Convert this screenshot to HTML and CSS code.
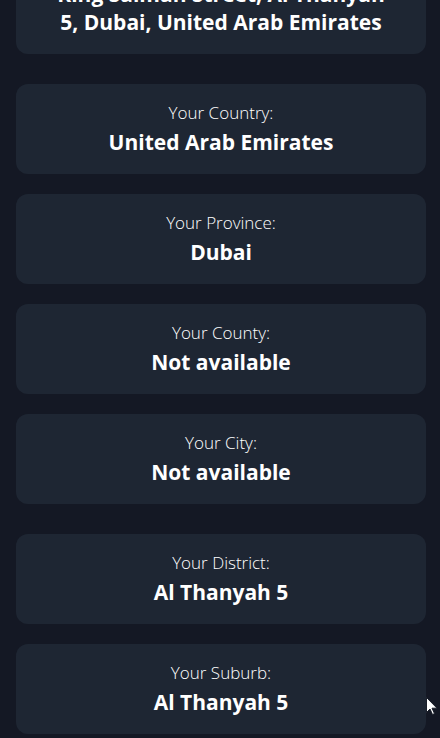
FILE: index.html
```html
<!DOCTYPE html>
<html lang="en">
<head>
    <meta charset="UTF-8">
    <meta name="viewport" content="width=device-width, initial-scale=1.0">
    <title>Your Location</title>
    <link rel="stylesheet" href="styles.css">
</head>
<body>
    <div class="location-list">
        <div class="info-card spaced">
            <p class="info-label">Your Address:</p>
            <p class="info-value">King Salman Street, Al Thanyah<br>5, Dubai, United Arab Emirates</p>
        </div>
        <div class="info-card">
            <p class="info-label">Your Country:</p>
            <p class="info-value">United Arab Emirates</p>
        </div>
        <div class="info-card">
            <p class="info-label">Your Province:</p>
            <p class="info-value">Dubai</p>
        </div>
        <div class="info-card">
            <p class="info-label">Your County:</p>
            <p class="info-value">Not available</p>
        </div>
        <div class="info-card spaced">
            <p class="info-label">Your City:</p>
            <p class="info-value">Not available</p>
        </div>
        <div class="info-card">
            <p class="info-label">Your District:</p>
            <p class="info-value">Al Thanyah 5</p>
        </div>
        <div class="info-card">
            <p class="info-label">Your Suburb:</p>
            <p class="info-value">Al Thanyah 5</p>
        </div>
    </div>

    <!-- mouse pointer -->
    <svg class="pointer" width="12" height="19" viewBox="0 0 12 19">
        <path d="M0.5 0.5 L0.5 15.5 L4 12 L6.5 17.5 L8.5 16.6 L6 11.2 L11 11.2 Z" fill="#fff" stroke="#1a1f2a" stroke-width="1"/>
    </svg>
</body>
</html>
```

FILE: styles.css
```css
body {
    margin: 0;
    background-color: #141824;
    font-family: 'Open Sans', 'Noto Sans', sans-serif;
    color: #fff;
    overflow: hidden;
}
.location-list {
    margin-top: -64px;
    padding: 0 14px 0 16px;
}
.info-card {
    background-color: #1e2633;
    border-radius: 12px;
    padding: 17px 16px 18px;
    margin-bottom: 20px;
    text-align: center;
}
.info-card.spaced {
    margin-bottom: 30px;
}
.info-label {
    margin: 0 0 3px;
    font-size: 17px;
    line-height: 24px;
    font-weight: 300;
}
.info-value {
    margin: 0;
    font-size: 21px;
    line-height: 28px;
    font-weight: 700;
}
.pointer {
    position: absolute;
    left: 426px;
    top: 697px;
}
```
